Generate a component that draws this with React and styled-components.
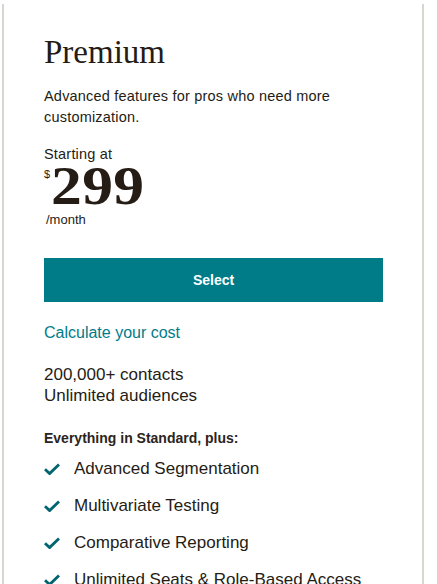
import React from "react";
import styled, { createGlobalStyle } from "styled-components";

const GlobalStyle = createGlobalStyle`
  html, body {
    margin: 0;
    padding: 0;
    background: #fff;
  }
  body {
    font-family: "Liberation Sans", Arial, sans-serif;
    color: #241c15;
    overflow: hidden;
  }
`;

const Page = styled.div`
  padding: 4px 13px 0 2px;
  height: 584px;
  box-sizing: border-box;
`;

const Card = styled.div`
  border-left: 2px solid #d9d5d1;
  border-right: 2px solid #d9d5d1;
  padding: 28px 39px 0 40px;
  height: 100%;
  box-sizing: border-box;
`;

const Title = styled.h2`
  margin: 0;
  font-family: "Liberation Serif", "Times New Roman", serif;
  font-weight: 400;
  font-size: 33px;
  line-height: 40px;
`;

const Description = styled.p`
  margin: 14px 0 0;
  font-size: 14.5px;
  letter-spacing: 0.2px;
  line-height: 21px;
`;

const Starting = styled.div`
  margin-top: 18px;
  font-size: 14.5px;
  letter-spacing: 0.2px;
  line-height: 16px;
`;

const PriceRow = styled.div`
  display: flex;
  align-items: flex-start;
  height: 46px;
`;

const Currency = styled.span`
  font-size: 11px;
  margin-top: 6px;
  margin-right: 1px;
`;

// wide bold digits, stretched a little to match the original face
const Amount = styled.span`
  display: inline-block;
  font-family: "Liberation Serif", "Times New Roman", serif;
  font-weight: 700;
  font-size: 55px;
  line-height: 48px;
  letter-spacing: 0.3px;
  transform: scaleX(1.12);
  transform-origin: left center;
`;

const Period = styled.div`
  margin: 4px 0 0 2px;
  font-size: 13px;
  line-height: 16px;
`;

const SelectButton = styled.button`
  display: block;
  width: 100%;
  height: 44px;
  margin-top: 30px;
  border: none;
  background: #007c89;
  color: #fff;
  font-family: "Liberation Sans", Arial, sans-serif;
  font-weight: 700;
  font-size: 14px;
  cursor: pointer;
`;

const CalcLink = styled.a`
  display: block;
  margin-top: 21px;
  color: #007c89;
  font-size: 16px;
  line-height: 20px;
  text-decoration: none;
`;

const Limits = styled.div`
  margin-top: 21px;
  font-size: 17px;
  line-height: 21px;
`;

const PlusHeading = styled.div`
  margin-top: 23px;
  font-size: 14px;
  font-weight: 700;
  color: #2b2420;
  line-height: 18px;
`;

const Features = styled.ul`
  list-style: none;
  margin: 12px 0 0;
  padding: 0;
  display: flex;
  flex-direction: column;
  gap: 17px;
`;

const Feature = styled.li`
  display: flex;
  align-items: center;
  gap: 14px;
  font-size: 17px;
  line-height: 20px;
`;

const Check = () => (
  <svg width="16" height="12" viewBox="0 0 16 12" aria-hidden="true">
    <path d="M1 6.2 L5.6 10.6 L15 1.4" fill="none" stroke="#006570" strokeWidth="2.8" strokeLinejoin="miter" />
  </svg>
);

const features = [
  "Advanced Segmentation",
  "Multivariate Testing",
  "Comparative Reporting",
  "Unlimited Seats & Role-Based Access",
];

export default function App() {
  return (
    <>
      <GlobalStyle />
      <Page>
        <Card>
          <Title>Premium</Title>
          <Description>
            Advanced features for pros who need more customization.
          </Description>
          <Starting>Starting at</Starting>
          <PriceRow>
            <Currency>$</Currency>
            <Amount>299</Amount>
          </PriceRow>
          <Period>/month</Period>
          <SelectButton>Select</SelectButton>
          <CalcLink href="#">Calculate your cost</CalcLink>
          <Limits>
            200,000+ contacts
            <br />
            Unlimited audiences
          </Limits>
          <PlusHeading>Everything in Standard, plus:</PlusHeading>
          <Features>
            {features.map((f) => (
              <Feature key={f}>
                <Check />
                {f}
              </Feature>
            ))}
          </Features>
        </Card>
      </Page>
    </>
  );
}
